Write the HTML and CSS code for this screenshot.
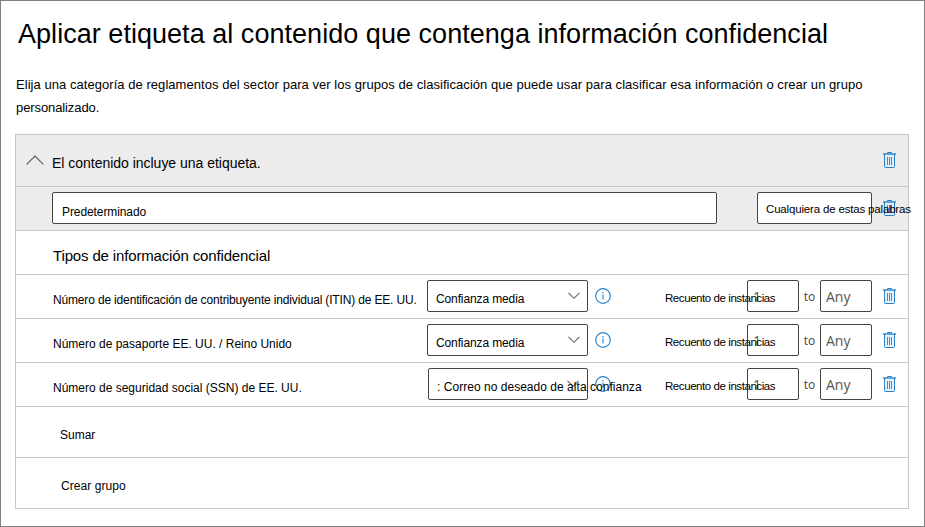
FILE: index.html
```html
<!DOCTYPE html>
<html lang="es">
<head>
<meta charset="utf-8">
<title>Aplicar etiqueta</title>
<link rel="stylesheet" href="styles.css">
</head>
<body>
<svg class="defs" width="0" height="0">
  <symbol id="trash" viewBox="0 0 13 16">
    <path d="M1.500 1.500h10v14h-10z" fill="#deecf9" fill-opacity=".7"/>
    <path d="M4.500 1.500v-1h4v1M1.500 2v12.500q0 1 1 1h8q1 0 1-1V2" fill="none" stroke="#2380ca"/>
    <path d="M0 2h13" stroke="#0f74c4" stroke-width="1.200"/>
    <path d="M4.500 5v8M6.500 5v8M8.500 5v8" fill="none" stroke="#3a8fd0"/>
  </symbol>
  <symbol id="info" viewBox="0 0 16 16">
    <circle cx="8" cy="8" r="7.300" fill="none" stroke="#2a86cf" stroke-width="1.200"/>
    <path d="M8 6.500v5M8 4v1.500" stroke="#5ba3db" stroke-width="1.500"/>
  </symbol>
  <symbol id="down" viewBox="0 0 12 8"><path d="M.5.800 6 6.300 11.500.800" fill="none" stroke="#666" stroke-width="1.100"/></symbol>
</svg>
<main class="page">
  <h1 class="title">Aplicar etiqueta al contenido que contenga información confidencial</h1>
  <p class="intro"><span class="intro-first">Elija una categoría de reglamentos del sector para ver los grupos de clasificación que puede usar para clasificar esa información o crear un grupo</span><br><span class="intro-last">personalizado.</span></p>
  <section class="panel">
    <header class="head">
      <svg class="up" viewBox="0 0 18 10"><path d="M.7 9.300 9 1l8.300 8.300" fill="none" stroke="#555" stroke-width="1.100"/></svg>
      <span class="head-text">El contenido incluye una etiqueta.</span>
      <svg class="trash"><use href="#trash"/></svg>
    </header>
    <div class="group">
      <div class="box name"><span class="name-text">Predeterminado</span></div>
      <div class="box match"><span class="match-text">Cualquiera de estas palabras</span></div>
      <svg class="trash"><use href="#trash"/></svg>
    </div>
    <h2 class="subtitle"><span class="subtitle-text">Tipos de información confidencial</span></h2>
    <div class="row">
      <span class="label label-itin">Número de identificación de contribuyente individual (ITIN) de EE. UU.</span>
      <div class="box select"><span class="medium">Confianza media</span><svg class="down"><use href="#down"/></svg></div>
      <svg class="info"><use href="#info"/></svg>
      <span class="count">Recuento de instancias</span>
      <div class="box num">1</div><span class="to">to</span><div class="box num">Any</div>
      <svg class="trash"><use href="#trash"/></svg>
    </div>
    <div class="row">
      <span class="label">Número de pasaporte EE. UU. / Reino Unido</span>
      <div class="box select"><span class="medium">Confianza media</span><svg class="down"><use href="#down"/></svg></div>
      <svg class="info"><use href="#info"/></svg>
      <span class="count">Recuento de instancias</span>
      <div class="box num">1</div><span class="to">to</span><div class="box num">Any</div>
      <svg class="trash"><use href="#trash"/></svg>
    </div>
    <div class="row">
      <span class="label">Número de seguridad social (SSN) de EE. UU.</span>
      <div class="box select select-high"><span class="high">: Correo no deseado de alta confianza</span><svg class="down"><use href="#down"/></svg></div>
      <svg class="info"><use href="#info"/></svg>
      <span class="count">Recuento de instancias</span>
      <div class="box num">1</div><span class="to">to</span><div class="box num">Any</div>
      <svg class="trash"><use href="#trash"/></svg>
    </div>
    <div class="action"><span class="add">Sumar</span></div>
    <div class="action"><span class="create">Crear grupo</span></div>
  </section>
</main>
</body>
</html>
```
FILE: styles.css
```css
* { box-sizing: border-box; }
body { margin: 0; background: #fff; color: #000; font-family: "Liberation Sans", Arial, sans-serif; }
.defs { display: block; }
.page { height: 527px; border: 1px solid #808080; padding: 17px 15px 0 14px; overflow: hidden; }
.title { margin: 0 0 0 3px; font-size: 27px; font-weight: 400; line-height: 32px; letter-spacing: .037px; white-space: nowrap; }
.intro { margin: 23px 0 0 1px; font-size: 13px; line-height: 23px; white-space: nowrap; }
.intro-first { letter-spacing: .047px; }
.intro-last { letter-spacing: -.1px; }
.panel { margin-top: 15px; border: 1px solid #c8c8c8; border-bottom: 0; font-size: 12px; white-space: nowrap; }
.head, .group { display: flex; background: #ececec; border-bottom: 1px solid #c8c8c8; }
.head { height: 52px; padding: 17px 12px 0 10px; }
.up { width: 18px; height: 10px; margin-top: 3px; }
.head-text { margin-left: 8px; flex: 1; font-size: 14px; line-height: 22px; letter-spacing: -.02px; }
.trash { width: 13px; height: 16px; flex: none; }
.group { height: 44px; padding: 5px 12px 0 36px; }
.group .trash { margin: 8px 0 0 11px; }
.box { background: #fff; border: 1px solid #444; border-radius: 2px; height: 32px; flex: none; }
.name { width: 665px; padding: 11px 9px 0; line-height: 16px; letter-spacing: -.09px; }
.match { width: 115px; margin-left: 40px; padding: 8px 8px 0; font-size: 11.5px; line-height: 16px; letter-spacing: -.17px; }
.match-text, .high, .count { position: relative; z-index: 1; }
.subtitle { margin: 0; height: 44px; padding: 14px 0 0 37px; font-size: 15px; font-weight: 400; line-height: 22px; letter-spacing: -.15px; border-bottom: 1px solid #c8c8c8; }
.row { display: grid; grid-template-columns: 374px 161px 7px 16px 54px 82px 52px 21px 52px 11px 14px; height: 44px; padding: 5px 0 0 37px; border-bottom: 1px solid #c8c8c8; }
.label { padding-top: 12px; line-height: 16px; }
.label-itin { letter-spacing: -.16px; }
.select { display: flex; padding: 10px 7px 0 8px; line-height: 16px; }
.select-high { margin-left: 1px; padding-right: 7px; }
.medium { flex: 1; letter-spacing: -.12px; }
.high { width: 130px; letter-spacing: .03px; }
.down { width: 12px; height: 8px; margin-top: 1px; flex: none; }
.info { grid-column: 4; width: 16px; height: 16px; margin-top: 8px; }
.count { grid-column: 6; padding-top: 10px; font-size: 11.5px; line-height: 16px; letter-spacing: -.43px; }
.num { font: 14px/32px "Open Sans", sans-serif; color: #555; padding-left: 5px; }
.to { font: 12px/32px "Open Sans", sans-serif; color: #444; text-align: center; padding-top: 1px; }
.row .trash { grid-column: 11; margin-top: 8px; }
.action { height: 51px; padding: 20px 0 0 44px; line-height: 16px; border-bottom: 1px solid #c8c8c8; }
.create { margin-left: 1px; letter-spacing: .07px; }
```
